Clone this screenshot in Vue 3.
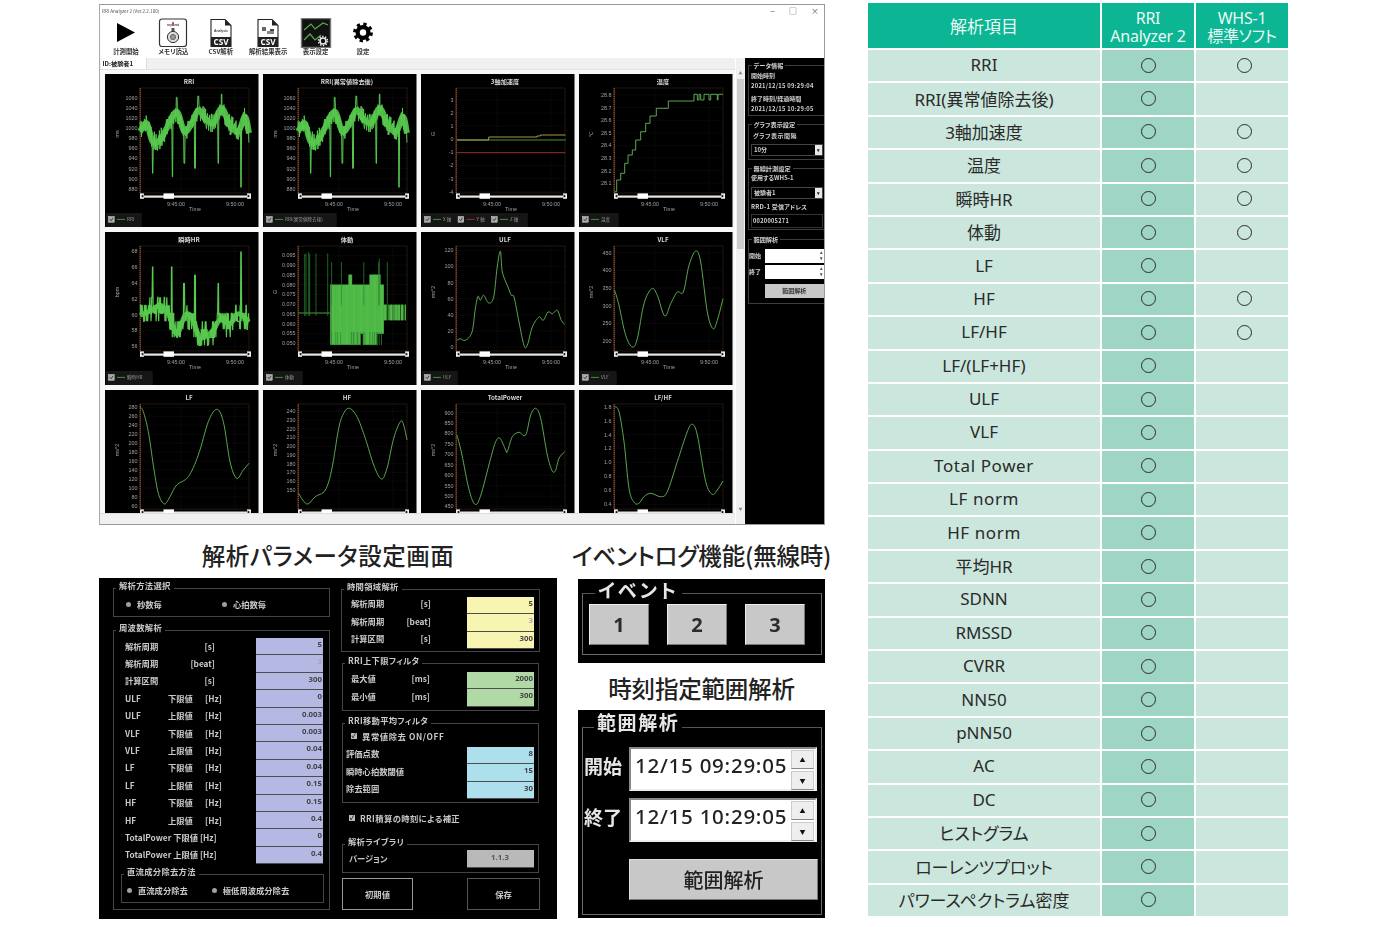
<script setup>
const f = (n) => n.toFixed(1)
const rng = (seed) => () => ((seed = (seed * 16807) % 2147483647) / 2147483647)

function smooth(pts, ox, oy) {
  const p = pts.map(([x, y]) => [(x - ox) / 3, (y - oy) / 3])
  let d = `M${f(p[0][0])} ${f(p[0][1])}`
  for (let i = 0; i < p.length - 1; i++) {
    const a = p[i - 1] || p[i], b = p[i], c = p[i + 1], e = p[i + 2] || c
    d += `C${f(b[0] + (c[0] - a[0]) / 6)} ${f(b[1] + (c[1] - a[1]) / 6)} ${f(c[0] - (e[0] - b[0]) / 6)} ${f(c[1] - (e[1] - b[1]) / 6)} ${f(c[0])} ${f(c[1])}`
  }
  return d
}

function noisy(ctrl, ox, oy, amp, spikes, seed, q = 0) {
  const r = rng(seed)
  let d = '', seg = 0
  for (let x = ctrl[0][0]; x <= ctrl[ctrl.length - 1][0]; x += 1.1) {
    while (seg < ctrl.length - 2 && x > ctrl[seg + 1][0]) seg++
    const [x0, y0] = ctrl[seg], [x1, y1] = ctrl[seg + 1]
    let y = y0 + ((y1 - y0) * (x - x0)) / (x1 - x0) + (r() - 0.5) * 2 * amp
    if (q) y = Math.round(y / q) * q
    for (const [sx, sy] of spikes) if (Math.abs(x - sx) < 1.2) y = sy
    d += `${d ? 'L' : 'M'}${f((x - ox) / 3)} ${f((y - oy) / 3)}`
  }
  return d
}

function steps(pts, ox, oy) {
  let d = `M${f((pts[0][0] - ox) / 3)} ${f((pts[0][1] - oy) / 3)}`
  for (const [x, y] of pts.slice(1)) d += `H${f((x - ox) / 3)}V${f((y - oy) / 3)}`
  return d
}

function bodyMotion() {
  const r = rng(77), ox = 493, oy = 20
  const v = (x, a, b) => `M${f((x - ox) / 3)} ${f((a - oy) / 3)}V${f((b - oy) / 3)}`
  let light = `M${f(107 / 3)} ${f(243 / 3)}H${f(202 / 3)}`, dark = ''
  for (const x of [618, 622, 630, 633, 652, 687]) dark += v(x, 80 + (x % 5) * 2, 272)
  let top = 178, bot = 358
  for (let x = 696; x < 855; x += 1.4) {
    if (r() > 0.9) top = r() > 0.5 ? 148 : 178
    if (r() > 0.9) bot = r() > 0.35 ? 358 : 325
    light += v(x, top, bot)
    if (r() > 0.88) dark += v(x, 320, 360)
    if (r() > 0.95) dark += v(x, 110, 240)
  }
  for (let x = 856; x < 925; x += 1.4) {
    if (r() > 0.3) light += v(x, 238, 285)
  }
  dark += v(698, 175, 358) + v(842, 100, 240) + v(866, 110, 285)
  return { light, dark }
}

const lab = (vals, y0, step, oy) => vals.map((t, i) => ({ t: String(t), y: (y0 + i * step - oy) / 3 }))
const seq = (a, b, s, fix = 0) => {
  const out = []
  for (let i = 0; i <= Math.round((b - a) / s); i++) out.push((a + i * s).toFixed(fix))
  return out
}

const rriCtrl = [[125, 395], [145, 370], [163, 425], [185, 420], [205, 385], [235, 335], [258, 395], [280, 370], [300, 330], [320, 355], [345, 370], [370, 325], [395, 375], [420, 395], [440, 350], [452, 400]]
const rriPath = noisy(rriCtrl, 20, 222, 30, [[163, 520], [222, 530], [258, 490], [290, 505], [360, 490], [428, 562], [235, 292], [300, 288], [370, 282]], 11)
const rriBody = smooth(rriCtrl, 20, 222)
const hrCtrl = [[125, 270], [160, 255], [185, 240], [210, 265], [235, 325], [260, 270], [280, 275], [305, 335], [340, 320], [365, 285], [395, 295], [420, 265], [452, 290]]
const hrPath = noisy(hrCtrl, 20, 20, 36, [[163, 125], [220, 125], [257, 175], [290, 150], [360, 175], [428, 80]], 23, 24)
const hrBody = smooth(hrCtrl, 20, 20)
const bm = bodyMotion()

const G = '#64b85a', BR = '#58c94e'
const charts = [
  { title: 'RRI', unit: 'ms', labels: lab(seq(880, 1060, 20).reverse(), 293, 30.4, 222), legend: ['RRI'], w: 36, lines: [{ d: rriBody, c: '#4db845', w: 6 }, { d: rriPath, c: BR, w: 1 }] },
  { title: 'RRI(異常値除去後)', unit: 'ms', labels: lab(seq(880, 1060, 20).reverse(), 293, 30.4, 222), legend: ['RRI(異常値除去後)'], w: 73, lines: [{ d: rriBody, c: '#4db845', w: 6 }, { d: rriPath, c: BR, w: 1 }] },
  {
    title: '3軸加速度', unit: 'G', labels: lab(['3', '2', '1', '0', '-1', '-2', '-3', '-4'], 300, 39.3, 222), legend: ['X 軸', 'Y 軸', 'Z 軸'], w: 106,
    lines: [
      { d: steps([[1075, 420], [1400, 418]], 967, 222), c: '#4d9c43', w: .9 },
      { d: steps([[1075, 458], [1400, 458]], 967, 222), c: '#a5362c', w: .9 },
      { d: steps([[1075, 420], [1165, 420], [1170, 411], [1315, 408], [1325, 405], [1400, 406]], 967, 222), c: '#b5a94a', w: .9 }
    ]
  },
  {
    title: '温度', unit: '℃', labels: lab(seq(28.1, 28.8, 0.1, 1).reverse(), 285, 37.8, 222), legend: ['温度'], w: 39,
    lines: [{
      d: steps([[372, 575], [378, 540], [390, 520], [402, 490], [412, 465], [425, 450], [435, 420], [450, 395], [465, 370], [478, 348], [497, 325], [533, 303], [610, 283], [620, 300], [625, 283], [630, 300], [640, 283], [655, 300], [660, 283], [680, 300], [682, 283], [697, 283]], 265, 222),
      c: G, w: .9
    }]
  },
  { title: '瞬時HR', unit: 'bpm', labels: lab(['68', '66', '64', '62', '60', '58', '56'], 78, 47.5, 20), legend: ['瞬時HR'], w: 47, lines: [{ d: hrBody, c: '#4db845', w: 5 }, { d: hrPath, c: BR, w: 1.2 }] },
  {
    title: '体動', unit: 'G', labels: lab(seq(0.05, 0.095, 0.005, 3).reverse(), 90, 29.3, 20), legend: ['体動'], w: 39,
    lines: [{ d: bm.light, c: BR, w: .8 }, { d: bm.dark, c: '#2f8a34', w: .7 }]
  },
  {
    title: 'ULF', unit: 'ms^2', labels: lab(['120', '100', '80', '60', '40', '20', '0'], 75, 48.4, 20), legend: ['ULF'], w: 36,
    lines: [{ d: smooth([[1075, 345], [1085, 340], [1100, 345], [1120, 320], [1130, 250], [1138, 213], [1145, 225], [1155, 210], [1170, 233], [1185, 215], [1195, 130], [1205, 78], [1211, 140], [1226, 180], [1238, 210], [1246, 215], [1261, 290], [1276, 360], [1286, 360], [1301, 305], [1321, 275], [1334, 285], [1348, 260], [1361, 265], [1376, 255], [1388, 285], [1398, 297]], 967, 20), c: G, w: .9 }]
  },
  {
    title: 'VLF', unit: 'ms^2', labels: lab(['450', '400', '350', '300', '250', '200'], 82, 53, 20), legend: ['VLF'], w: 37,
    lines: [{ d: smooth([[372, 195], [385, 240], [405, 330], [425, 365], [440, 340], [460, 235], [483, 190], [500, 210], [522, 272], [540, 235], [560, 200], [578, 200], [595, 120], [615, 77], [630, 110], [650, 260], [667, 310], [680, 285], [697, 220]], 265, 20), c: G, w: .9 }]
  },
  {
    title: 'LF', unit: 'ms^2', labels: lab(seq(60, 280, 20).reverse(), 547, 26.9, 495), lines: [{ d: smooth([[125, 545], [135, 560], [150, 620], [165, 720], [180, 805], [198, 837], [215, 815], [235, 780], [270, 755], [300, 690], [330, 590], [355, 553], [375, 590], [395, 710], [415, 760], [435, 735], [452, 715]], 20, 495), c: G, w: .9 }]
  },
  {
    title: 'HF', unit: 'ms^2', labels: lab(seq(150, 240, 10).reverse(), 559, 26.2, 495), lines: [{ d: smooth([[600, 805], [612, 825], [628, 837], [650, 815], [680, 795], [700, 730], [720, 610], [735, 565], [752, 550], [775, 575], [800, 640], [825, 720], [848, 762], [865, 730], [885, 640], [905, 590], [915, 600], [925, 645]], 493, 495), c: G, w: .9 }]
  },
  {
    title: 'TotalPower', unit: 'ms^2', labels: lab(seq(450, 900, 50).reverse(), 563, 31.3, 495), lines: [{ d: smooth([[1075, 630], [1090, 690], [1110, 790], [1128, 837], [1145, 815], [1176, 700], [1191, 650], [1204, 640], [1221, 675], [1226, 680], [1241, 635], [1261, 622], [1281, 630], [1296, 570], [1311, 550], [1326, 580], [1346, 690], [1361, 738], [1371, 735], [1381, 700], [1398, 680]], 967, 495), c: G, w: .9 }]
  },
  {
    title: 'LF/HF', unit: '', labels: lab(seq(0.4, 1.8, 0.2, 1).reverse(), 545, 41.9, 495), lines: [{ d: smooth([[372, 545], [385, 560], [400, 650], [415, 790], [430, 832], [445, 835], [460, 815], [480, 805], [510, 815], [530, 800], [560, 710], [590, 620], [605, 598], [620, 630], [645, 770], [665, 808], [680, 795], [697, 768]], 265, 495), c: G, w: .9 }]
  }
]

const tools = ['計測開始', 'メモリ読込', 'CSV解析', '解析結果表示', '表示設定', '設定']

const freq = [
  { a: '解析周期', u: '[s]', v: '5' }, { a: '解析周期', u: '[beat]', v: '3', dim: true }, { a: '計算区間', u: '[s]', v: '300' },
  { a: 'ULF', b: '下限値', c: '[Hz]', v: '0' }, { a: 'ULF', b: '上限値', c: '[Hz]', v: '0.003' },
  { a: 'VLF', b: '下限値', c: '[Hz]', v: '0.003' }, { a: 'VLF', b: '上限値', c: '[Hz]', v: '0.04' },
  { a: 'LF', b: '下限値', c: '[Hz]', v: '0.04' }, { a: 'LF', b: '上限値', c: '[Hz]', v: '0.15' },
  { a: 'HF', b: '下限値', c: '[Hz]', v: '0.15' }, { a: 'HF', b: '上限値', c: '[Hz]', v: '0.4' },
  { full: 'TotalPower 下限値 [Hz]', v: '0' }, { full: 'TotalPower 上限値 [Hz]', v: '0.4' }
]
const timeRows = [{ a: '解析周期', u: '[s]', v: '5' }, { a: '解析周期', u: '[beat]', v: '3', dim: true }, { a: '計算区間', u: '[s]', v: '300' }]
const limitRows = [{ a: '最大値', u: '[ms]', v: '2000' }, { a: '最小値', u: '[ms]', v: '300' }]
const moveRows = [{ full: '評価点数', v: '8' }, { full: '瞬時心拍数閾値', v: '15' }, { full: '除去範囲', v: '30' }]

const rows = [
  ['RRI', 1, 1], ['RRI(異常値除去後)', 1, 0], ['3軸加速度', 1, 1], ['温度', 1, 1], ['瞬時HR', 1, 1], ['体動', 1, 1],
  ['LF', 1, 0], ['HF', 1, 1], ['LF/HF', 1, 1], ['LF/(LF+HF)', 1, 0], ['ULF', 1, 0], ['VLF', 1, 0], ['Total Power', 1, 0],
  ['LF norm', 1, 0], ['HF norm', 1, 0], ['平均HR', 1, 0], ['SDNN', 1, 0], ['RMSSD', 1, 0], ['CVRR', 1, 0], ['NN50', 1, 0],
  ['pNN50', 1, 0], ['AC', 1, 0], ['DC', 1, 0], ['ヒストグラム', 1, 0], ['ローレンツプロット', 1, 0], ['パワースペクトラム密度', 1, 0]
]
</script>

<template>
  <div class="page">
    <div class="left">
      <section class="window">
        <div class="titlebar">
          <span>RRI Analyzer 2 (Ver.2.2.100)</span>
          <span class="winctl"><i>−</i><i>□</i><i>×</i></span>
        </div>
        <div class="toolbar">
          <div v-for="(t, i) in tools" :key="t" class="tool">
            <svg width="32" height="30" viewBox="0 0 32 30">
              <polygon v-if="i === 0" points="7,5 25,14.5 7,24" fill="#000" />
              <g v-if="i === 1">
                <rect x="2.5" y="1" width="27" height="27.5" rx="2.5" fill="#fff" stroke="#333" stroke-width="1.2" />
                <text x="16" y="7.5" class="tiny" text-anchor="middle">myBeat</text>
                <path d="M15 5l1-1.6 1 1.6-1 1.4z" fill="#d02030" />
                <rect x="14.5" y="10" width="3" height="3" fill="#555" />
                <circle cx="16" cy="19" r="5.6" fill="#ddd" stroke="#333" stroke-width="1" />
                <circle cx="16" cy="19" r="2.6" fill="#999" stroke="#444" stroke-width=".7" />
              </g>
              <g v-if="i === 2 || i === 3">
                <path d="M6 1.5H20L26 7.5V28.5H6Z" fill="#fff" stroke="#222" stroke-width="1.1" />
                <path d="M20 1.5V7.5H26Z" fill="#222" />
                <rect x="6" y="19" width="20" height="9.5" fill="#222" />
                <text x="16" y="27" class="csv" text-anchor="middle">CSV</text>
                <text v-if="i === 2" x="16" y="14" class="tiny" text-anchor="middle">Analysis</text>
                <g v-if="i === 3">
                  <rect x="10" y="9" width="4" height="4" fill="#666" />
                  <rect x="15" y="13" width="7" height="3" fill="#888" />
                  <rect x="18" y="11" width="4" height="2" fill="#444" />
                </g>
              </g>
              <g v-if="i === 4">
                <rect x="1.5" y="0.5" width="29" height="29" fill="#111" stroke="#777" stroke-width="1.4" />
                <path d="M4 12L11 6 15 11 23 5 28 7M4 22L10 16 15 22 21 17" fill="none" stroke="#52b04a" stroke-width="1.2" />
                <circle cx="23" cy="23" r="3" fill="none" stroke="#eee" stroke-width="1.6" />
                <circle cx="23" cy="23" r="4.6" fill="none" stroke="#eee" stroke-width="1.4" stroke-dasharray="1.4 1.5" />
              </g>
              <g v-if="i === 5">
                <circle cx="16" cy="14.5" r="7.5" fill="#000" />
                <circle cx="16" cy="14.5" r="8.4" fill="none" stroke="#000" stroke-width="3" stroke-dasharray="3.3 3.3" />
                <circle cx="16" cy="14.5" r="3.2" fill="#fff" />
              </g>
            </svg>
            <span>{{ t }}</span>
          </div>
        </div>
        <div class="wbody">
          <div class="main">
            <div class="tabs"><span class="tab">ID:被験者1</span></div>
            <div class="chart-wrap">
              <div class="charts">
                <svg v-for="c in charts" :key="c.title" class="chart" width="153.5" height="153.5" viewBox="0 0 153.5 153.5">
                  <rect width="153.5" height="153.5" fill="#000" />
                  <text x="84" y="10" class="ctitle" text-anchor="middle">{{ c.title }}</text>
                  <g stroke="#262626" stroke-width=".4" stroke-dasharray="1 1">
                    <line v-for="l in c.labels" :key="l.t" x1="35" x2="144" :y1="l.y" :y2="l.y" />
                    <line x1="76" x2="76" y1="14" y2="119" />
                    <line x1="130" x2="130" y1="14" y2="119" />
                  </g>
                  <rect x="35" y="14" width="109" height="105" fill="none" stroke="#3d2612" stroke-width=".6" />
                  <line x1="35.2" x2="35.2" y1="14" y2="119" stroke="#b0623a" stroke-width="1" stroke-dasharray="1.4 .6" />
                  <text v-for="l in c.labels" :key="l.t" x="32.5" :y="l.y + 1.9" class="tick" text-anchor="end">{{ l.t }}</text>
                  <text x="14" y="60" class="tick" text-anchor="middle" transform="rotate(-90 14 60)">{{ c.unit }}</text>
                  <path v-for="(l, i) in c.lines" :key="i" :d="l.d" :stroke="l.c" fill="none" :stroke-width="l.w" />
                  <g>
                    <rect x="35" y="121.5" width="110" height="2.2" fill="#e8e8e8" />
                    <rect x="58.5" y="119.4" width="10.5" height="5.4" fill="#fff" />
                    <rect x="35" y="119.4" width="4" height="5.4" fill="#eee" />
                    <rect x="142" y="119.4" width="4" height="5.4" fill="#eee" />
                    <path d="M38.4 120.5v3.2l-2.4-1.6zM142.6 120.5v3.2l2.4-1.6z" fill="#111" />
                  </g>
                  <g v-if="c.legend">
                    <text x="71" y="131.5" class="tick" text-anchor="middle">9:45:00</text>
                    <text x="130" y="131.5" class="tick" text-anchor="middle">9:50:00</text>
                    <text x="90" y="137" class="tick" text-anchor="middle">Time</text>
                    <rect x="0.8" y="139" :width="c.w" height="14" fill="#161616" />
                    <g v-for="(name, i) in c.legend" :key="name" :transform="`translate(${i * 33.5} 0)`">
                      <rect x="3.6" y="142.6" width="5.6" height="5.6" fill="#aaa" stroke="#ddd" stroke-width=".5" />
                      <path d="M4.8 145.2l1.3 1.5 2-2.8" fill="none" stroke="#222" stroke-width=".8" />
                      <line x1="12" x2="20" y1="145.4" y2="145.4" :stroke="['#4d9c43', '#a5362c', '#4d9c43'][i]" stroke-width=".9" />
                      <text x="22" y="147.2" class="legend">{{ name }}</text>
                    </g>
                  </g>
                </svg>
              </div>
            </div>
            <div class="foot"></div>
          </div>
          <div class="vscroll"><i>▲</i><span class="thumb"></span><b>▼</b></div>
          <aside class="side">
            <div class="sgroup g1">
              <span class="slegend">データ情報</span>
              <p>開始時刻</p><p class="date">2021/12/15 09:29:04</p>
              <p class="mt">終了時刻/経過時間</p><p class="date">2021/12/15 10:29:05</p>
            </div>
            <div class="sgroup g2">
              <span class="slegend">グラフ表示設定</span>
              <p class="wide">グラフ表示間隔</p>
              <div class="sel"><span>10分</span><i>▾</i></div>
            </div>
            <div class="sgroup g3">
              <span class="slegend">無線計測設定</span>
              <p>使用するWHS-1</p>
              <div class="sel"><span>被験者1</span><i>▾</i></div>
              <p class="mt2">RRD-1 受信アドレス</p>
              <div class="addr">0020005271</div>
            </div>
            <div class="sgroup g4">
              <span class="slegend">範囲解析</span>
              <div class="srow"><span>開始</span><div class="sinput"><i>▴</i><i>▾</i></div></div>
              <div class="srow"><span>終了</span><div class="sinput"><i>▴</i><i>▾</i></div></div>
              <div class="sbtn">範囲解析</div>
            </div>
          </aside>
        </div>
      </section>

      <div class="lower">
        <div class="lcol">
          <h2 class="heading h-param">解析パラメータ設定画面</h2>
          <section class="params">
            <div class="pcol">
              <div class="group g-method">
                <span class="legend-t">解析方法選択</span>
                <div class="radios">
                  <span class="radio r1"><i></i>秒数毎</span>
                  <span class="radio r2"><i></i>心拍数毎</span>
                </div>
              </div>
              <div class="group g-freq">
                <span class="legend-t">周波数解析</span>
                <div v-for="(r, i) in freq" :key="i" class="prow">
                  <span v-if="r.full" class="lbl">{{ r.full }}</span>
                  <template v-else-if="r.u">
                    <span class="lbl l-a">{{ r.a }}</span><span class="lbl l-u">{{ r.u }}</span>
                  </template>
                  <template v-else>
                    <span class="lbl l-s">{{ r.a }}</span><span class="lbl l-m">{{ r.b }}</span><span class="lbl">{{ r.c }}</span>
                  </template>
                  <span class="pinput purple" :class="{ dim: r.dim }">{{ r.v }}</span>
                </div>
                <div class="group g-dc">
                  <span class="legend-t">直流成分除去方法</span>
                  <div class="radios">
                    <span class="radio r3"><i></i>直流成分除去</span>
                    <span class="radio r4"><i></i>極低周波成分除去</span>
                  </div>
                </div>
              </div>
            </div>
            <div class="pcol pcol2">
              <div class="group g-time">
                <span class="legend-t">時間領域解析</span>
                <div v-for="(r, i) in timeRows" :key="i" class="prow">
                  <span class="lbl l-a2">{{ r.a }}</span><span class="lbl l-u2">{{ r.u }}</span>
                  <span class="pinput yellow" :class="{ dim: r.dim }">{{ r.v }}</span>
                </div>
              </div>
              <div class="group g-limit">
                <span class="legend-t">RRI上下限フィルタ</span>
                <div v-for="(r, i) in limitRows" :key="i" class="prow">
                  <span class="lbl l-a2">{{ r.a }}</span><span class="lbl l-u3">{{ r.u }}</span>
                  <span class="pinput green">{{ r.v }}</span>
                </div>
              </div>
              <div class="group g-move">
                <span class="legend-t">RRI移動平均フィルタ</span>
                <div class="check c1"><i>✓</i>異常値除去 ON/OFF</div>
                <div v-for="(r, i) in moveRows" :key="i" class="prow">
                  <span class="lbl">{{ r.full }}</span>
                  <span class="pinput blue">{{ r.v }}</span>
                </div>
              </div>
              <div class="check c2"><i>✓</i>RRI積算の時刻による補正</div>
              <div class="group g-lib">
                <span class="legend-t">解析ライブラリ</span>
                <div class="prow">
                  <span class="lbl">バージョン</span>
                  <span class="pinput version">1.1.3</span>
                </div>
              </div>
              <div class="pbtns">
                <span class="pbtn active">初期値</span>
                <span class="pbtn">保存</span>
              </div>
            </div>
          </section>
        </div>

        <div class="rcol">
          <h2 class="heading h-event">イベントログ機能(無線時)</h2>
          <section class="event">
            <div class="bgroup ev">
              <span class="blegend bl-ev">イベント</span>
              <div class="evbtns"><span>1</span><span>2</span><span>3</span></div>
            </div>
          </section>
          <h2 class="heading h-range">時刻指定範囲解析</h2>
          <section class="range">
            <div class="bgroup rg">
              <span class="blegend bl-rg">範囲解析</span>
              <div class="rrow">
                <span class="rlabel">開始</span>
                <div class="time">
                  <span>12/15 09:29:05</span>
                  <div class="spin"><i>▲</i><i>▼</i></div>
                </div>
              </div>
              <div class="rrow">
                <span class="rlabel">終了</span>
                <div class="time">
                  <span>12/15 10:29:05</span>
                  <div class="spin"><i>▲</i><i>▼</i></div>
                </div>
              </div>
              <div class="rbtn">範囲解析</div>
            </div>
          </section>
        </div>
      </div>
    </div>

    <section class="table">
      <div class="th">解析項目</div>
      <div class="th two">RRI<br />Analyzer 2</div>
      <div class="th two">WHS-1<br />標準ソフト</div>
      <template v-for="r in rows" :key="r[0]">
        <div class="td" :class="{ sp: r[0].includes(' ') }">{{ r[0] }}</div>
        <div class="td mid"><i v-if="r[1]" class="o"></i></div>
        <div class="td"><i v-if="r[2]" class="o o3"></i></div>
      </template>
    </section>
  </div>
</template>

<style scoped>
.page {
  width: 1380px;
  height: 927px;
  display: flex;
  align-items: flex-start;
  padding: 3px 0 0 99px;
  box-sizing: border-box;
  overflow: hidden;
  font-family: "Noto Sans", "Noto Sans CJK JP", sans-serif;
  font-feature-settings: "palt";
  color: #222;
  background: #fff;
}
.left { width: 726px; margin-top: 1px; flex: none; }
i { font-style: normal; }
p { margin: 0; }
h2 { margin: 0; }

/* window */
.window {
  height: 521px;
  box-sizing: border-box;
  border: 1px solid #999;
  border-left-color: #aaa;
  display: flex;
  flex-direction: column;
  background: #fff;
  filter: blur(0.45px);
  font-family: "Noto Sans CJK JP", sans-serif;
}
.titlebar {
  height: 12px;
  flex: none;
  display: flex;
  align-items: center;
  justify-content: space-between;
  padding-left: 2px;
  font-size: 4.6px;
  color: #555;
}
.winctl { display: flex; gap: 14px; padding-right: 5px; font-size: 8px; color: #555; line-height: 1; }
.toolbar { height: 41px; flex: none; display: flex; padding-left: 2.3px; }
.tool { width: 47.4px; display: flex; flex-direction: column; align-items: center; padding-top: 1px; font-size: 6.4px; font-weight: 700; color: #333; line-height: 8px; white-space: nowrap; }
.tiny { font-size: 3.4px; font-family: "Liberation Sans", sans-serif; fill: #444; font-weight: 700; }
.csv { font-size: 8.2px; font-family: "Open Sans", sans-serif; fill: #fff; font-weight: 700; }
.wbody { flex: 1; display: flex; min-height: 0; }
.main { width: 635px; flex: none; display: flex; flex-direction: column; background: #f0f0f0; }
.tabs { height: 11px; flex: none; display: flex; background: #f0f0f0; border-bottom: 1px solid #e2e2e2; padding-left: 1px; }
.tab { height: 11px; width: 46px; background: #fff; border-right: 1px solid #ddd; font-size: 6.2px; font-weight: 700; line-height: 11px; color: #222; padding-left: 1.5px; box-sizing: border-box; }
.chart-wrap { flex: 1; min-height: 0; overflow: hidden; background: #f8f8f8; padding: 3.5px 0 0 5px; }
.charts { display: grid; grid-template-columns: repeat(4, 153.5px); grid-auto-rows: 153.5px; gap: 4.6px 4.6px; }
.chart { display: block; }
.ctitle { font-size: 6.2px; fill: #d8d8d8; font-weight: 700; }
.tick { font-size: 5.4px; fill: #a0a0a0; font-family: "Liberation Sans", sans-serif; }
.legend { font-size: 4.6px; fill: #999; }
.foot { height: 10px; flex: none; background: #f0f0f0; border-top: 1px solid #ddd; }
.vscroll { width: 9px; flex: none; margin-left: 1px; background: #f0f0f0; display: flex; flex-direction: column; align-items: center; padding-top: 12px; font-size: 4px; color: #888; box-sizing: border-box; position: relative; }
.thumb { width: 7px; height: 170px; background: #cdcdcd; margin-top: 3px; }
.vscroll b { margin-top: auto; margin-bottom: 12px; font-weight: 400; }

/* side */
.side { flex: 1; background: #000; padding: 7px 0 0 2.5px; color: #d0d0d0; font-size: 6px; font-weight: 700; line-height: 10px; box-sizing: border-box; }
.sgroup { position: relative; border: 1px solid #3e3e3e; border-right: 0; box-sizing: border-box; padding-left: 2.5px; }
.slegend { position: absolute; top: -5px; left: 3px; background: #000; padding: 0 2px; font-size: 6.2px; white-space: nowrap; }
.g1 { height: 51px; padding-top: 5px; }
.g1 p { line-height: 10px; }
.mt { margin-top: 3px; }
.date { letter-spacing: 0.28px; font-size: 5.8px; }
.g2 { height: 36px; margin-top: 8px; padding-top: 6px; }
.wide { letter-spacing: .5px; padding-left: 2px; }
.sel { margin-top: 3px; width: 72px; height: 11.5px; border: 1px solid #444; box-sizing: border-box; display: flex; align-items: center; justify-content: space-between; padding-left: 2px; }
.sel i { width: 7px; height: 100%; background: #e8e8e8; color: #222; text-align: center; font-size: 5px; line-height: 9px; }
.g3 { height: 62px; margin-top: 8px; padding-top: 4px; }
.g3 .sel { margin-top: 4px; }
.mt2 { margin-top: 3px; letter-spacing: .2px; }
.addr { margin-top: 2px; width: 72px; height: 14px; border: 1px solid #333; box-sizing: border-box; font-size: 5.6px; line-height: 12px; padding-left: 1px; letter-spacing: .3px; }
.g4 { height: 65px; margin-top: 9px; padding: 9px 0 0 0; }
.srow { height: 13.5px; margin-bottom: 2.5px; display: flex; align-items: center; gap: 2px; }
.srow span { width: 14px; padding-left: 0.5px; flex: none; }
.sinput { flex: 1; height: 100%; background: #fff; display: flex; flex-direction: column; align-items: flex-end; color: #555; font-size: 4.5px; line-height: 6px; padding-right: 1px; }
.sbtn { margin: 5px 0 0 16px; height: 14px; background: #c8c8c8; color: #333; text-align: center; line-height: 14px; }

/* lower */
.lower { display: flex; gap: 21px; }
.lcol { width: 458px; flex: none; }
.rcol { width: 247px; flex: none; }
.heading { font-size: 23.5px; font-weight: 500; color: #222; text-align: center; white-space: nowrap; letter-spacing: -0.2px; font-family: "Noto Sans CJK JP", sans-serif; }
.h-param { height: 53px; line-height: 60px; letter-spacing: .5px; }
.h-event { height: 54px; line-height: 60px; margin: 0 -20px 0 -20px; }
.h-range { height: 47px; line-height: 50px; }

/* params */
.params {
  height: 341px;
  background: #000;
  display: flex;
  gap: 11px;
  padding: 10px 0 0 14px;
  box-sizing: border-box;
  color: #c9c9c9;
  font-family: "Noto Sans CJK JP", sans-serif;
  font-size: 8.3px;
  font-weight: 700;
  filter: blur(0.35px);
}
.pcol { width: 217px; flex: none; }
.pcol2 { width: 199px; padding-top: 1px; }
.pcol2 .lbl { padding-bottom: 5px; }
.group { position: relative; border: 1px solid #444; box-sizing: border-box; }
.legend-t { position: absolute; top: -9px; left: 2px; background: #000; padding: 0 3px; line-height: 10px; white-space: nowrap; letter-spacing: .3px; }
.g-method { height: 29px; }
.radios { display: flex; height: 100%; align-items: center; position: relative; padding-top: 3px; box-sizing: border-box; }
.radio { display: flex; align-items: center; white-space: nowrap; }
.radio i { width: 5px; height: 5px; border-radius: 50%; background: #a0a0a0; margin-right: 6px; }
.r1 { margin-left: 12px; }
.r2 { margin-left: 60px; }
.g-freq { height: 280px; margin-top: 13px; padding: 7px 6px 0 11px; }
.prow { display: flex; align-items: center; height: 17.4px; }
.lbl { white-space: nowrap; padding-bottom: 2px; }
.l-a { width: 64px; }
.l-u { width: 26px; text-align: right; }
.l-s { width: 43px; }
.l-m { width: 37px; }
.pinput { margin-left: auto; width: 67px; height: 100%; box-sizing: border-box; border-bottom: 1px solid #4d4d4d; text-align: right; padding-right: 1px; color: #444; line-height: 12px; font-size: 7.8px; font-family: "Noto Sans", sans-serif; }
.dim { color: #a8a8a8; }
.purple { background: #b5b8e2; }
.yellow { background: #f8f5b3; }
.green { background: #b0d9a6; }
.blue { background: #ade0ec; }
.version { background: #b9b9b9; text-align: center; color: #555; height: 18px; line-height: 15px; }
.g-dc { height: 29px; margin: 10px -1px 0 -4px; }
.r3 { margin-left: 5px; }
.r4 { margin-left: 24px; }
.g-time { height: 63px; padding: 7px 5px 0 9px; }
.l-a2 { width: 50px; }
.l-u2 { width: 30px; text-align: right; }
.l-u3 { width: 29px; text-align: right; }
.g-limit { height: 48px; margin: 11px 0 0 1px; width: 197px; padding: 8px 4px 0 8px; }
.g-move { height: 80px; margin: 12px 0 0 1px; width: 197px; padding: 6px 4px 0 3px; }
.check { display: flex; align-items: center; white-space: nowrap; height: 12px; }
.check i { width: 6px; height: 6px; background: #bbb; color: #222; font-size: 6px; line-height: 6px; text-align: center; margin-right: 5px; }
.c1 { margin: 0 0 5px 5px; letter-spacing: .6px; }
.c2 { margin: 9px 0 0 8px; letter-spacing: .4px; }
.g-lib { height: 29px; margin: 20px 0 0 1px; width: 197px; padding: 5px 4px 0 6px; }
.g-lib .lbl { padding-bottom: 2px; }
.pbtns { display: flex; justify-content: space-between; margin-top: 5px; }
.pbtn { width: 73px; height: 32px; box-sizing: border-box; border: 1px solid #555; text-align: center; line-height: 30px; }
.pbtn.active { width: 71px; border: 1.5px solid #999; margin-left: 1px; }

/* event + range */
.event, .range { background: #000; position: relative; font-family: "Noto Sans CJK JP", sans-serif; color: #e6e6e6; filter: blur(0.25px); }
.event { height: 84px; padding: 14px 3px 0 4px; box-sizing: border-box; }
.range { height: 208px; padding: 17px 3px 0 4px; box-sizing: border-box; }
.bgroup { position: relative; border: 1.5px solid #6a6a6a; border-top-color: #555; box-sizing: border-box; }
.blegend { position: absolute; background: #000; padding: 0 3px; font-size: 19px; line-height: 20px; font-weight: 700; white-space: nowrap; }
.bl-ev { top: -14px; left: 12px; letter-spacing: 3px; }
.bl-rg { top: -16px; left: 11px; letter-spacing: 1.6px; }
.ev { height: 62px; }
.evbtns { display: flex; padding: 10px 0 0 6px; gap: 18px; }
.evbtns span { width: 60px; height: 41px; background: #c8c8c8; box-sizing: border-box; border: 1px solid; border-color: #eee #777 #777 #eee; color: #2c2c2c; font-size: 20px; font-weight: 700; text-align: center; line-height: 39px; font-family: "Noto Sans", sans-serif; }
.rg { height: 188px; padding-top: 18.5px; }
.rrow { display: flex; align-items: center; height: 44px; margin-bottom: 7px; }
.rlabel { width: 46px; padding: 0 0 7px 1px; box-sizing: border-box; font-size: 19px; font-weight: 700; white-space: nowrap; line-height: 1; }
.time { width: 188px; height: 44px; background: #fff; box-sizing: border-box; border: 2px solid; border-color: #888 #eee #eee #888; display: flex; justify-content: space-between; padding: 1px 1px 0 4px; color: #222; }
.time span { font-size: 20.5px; font-weight: 500; font-family: "Noto Sans", sans-serif; line-height: 30px; letter-spacing: .75px; white-space: nowrap; }
.spin { width: 23px; display: flex; flex-direction: column; gap: 2px; }
.spin i { flex: 1; background: #eee; border: 1px solid #ccc; box-sizing: border-box; border-bottom-color: #888; text-align: center; font-size: 6px; line-height: 17px; color: #111; }
.rbtn { margin: 17px 0 0 46px; width: 189px; height: 41px; background: #c8c8c8; box-sizing: border-box; border: 1px solid; border-color: #ddd #777 #777 #ddd; color: #222; font-size: 20px; font-weight: 500; text-align: center; line-height: 39px; }

/* table */
.table {
  margin-left: 43px;
  width: 420px;
  flex: none;
  display: grid;
  grid-template-columns: 232px 92px 92px;
  grid-template-rows: 45px repeat(26, 31.4px);
  gap: 2px;
  font-size: 17px;
}
.th { background: #0cb594; color: #eafaf4; display: flex; align-items: center; justify-content: center; font-size: 17px; }
.two { text-align: center; line-height: 18px; font-size: 16px; letter-spacing: -0.25px; padding-top: 2px; box-sizing: border-box; }
.td { background: #cbe6dc; display: flex; align-items: center; justify-content: center; color: #2a2a2a; white-space: nowrap; padding-bottom: 2px; box-sizing: border-box; }
.sp { letter-spacing: .6px; }
.mid { background: #9ed5c5; }
.o { width: 15px; height: 15px; border: 1.5px solid #2b2b2b; border-radius: 50%; box-sizing: border-box; margin-top: 1px; }
.o3 { margin-left: 5px; }
</style>

<style>
body { background: #fff; }
</style>
